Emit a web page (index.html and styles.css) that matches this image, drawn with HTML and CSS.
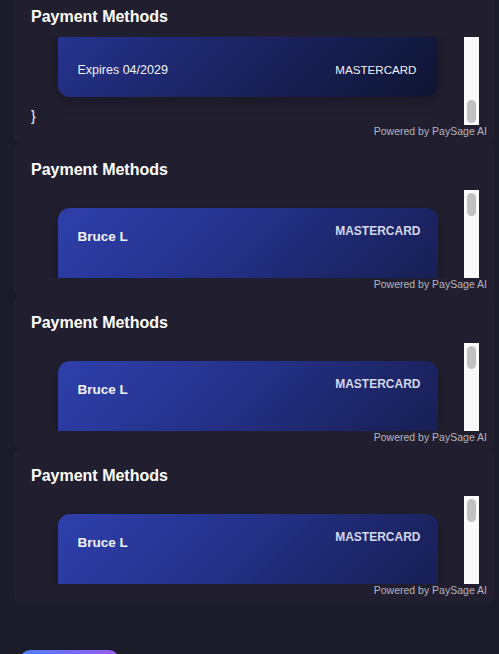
FILE: index.html
```html
<!DOCTYPE html>
<html lang="en">
<head>
<meta charset="utf-8">
<title>Payment Methods</title>
<link rel="stylesheet" href="styles.css">
</head>
<body>
<div class="stack">
  <section class="panel">
    <h2 class="panel-title">Payment Methods</h2>
    <div class="frame at-end">
      <div class="viewport">
        <div class="card">
          <div class="card-top">
            <span class="holder">Bruce L</span>
            <span class="brand">MASTERCARD</span>
          </div>
          <div class="card-bottom">
            <span class="expires">Expires 04/2029</span>
            <span class="brand-plain">MASTERCARD</span>
          </div>
        </div>
        <div class="raw">}</div>
      </div>
      <div class="scrollbar"><div class="thumb"></div></div>
    </div>
    <div class="powered">Powered by PaySage AI</div>
  </section>
  <section class="panel">
    <h2 class="panel-title">Payment Methods</h2>
    <div class="frame">
      <div class="viewport">
        <div class="card">
          <div class="card-top">
            <span class="holder">Bruce L</span>
            <span class="brand">MASTERCARD</span>
          </div>
          <div class="card-bottom">
            <span class="expires">Expires 04/2029</span>
            <span class="brand-plain">MASTERCARD</span>
          </div>
        </div>
        <div class="raw">}</div>
      </div>
      <div class="scrollbar"><div class="thumb"></div></div>
    </div>
    <div class="powered">Powered by PaySage AI</div>
  </section>
  <section class="panel">
    <h2 class="panel-title">Payment Methods</h2>
    <div class="frame">
      <div class="viewport">
        <div class="card">
          <div class="card-top">
            <span class="holder">Bruce L</span>
            <span class="brand">MASTERCARD</span>
          </div>
          <div class="card-bottom">
            <span class="expires">Expires 04/2029</span>
            <span class="brand-plain">MASTERCARD</span>
          </div>
        </div>
        <div class="raw">}</div>
      </div>
      <div class="scrollbar"><div class="thumb"></div></div>
    </div>
    <div class="powered">Powered by PaySage AI</div>
  </section>
  <section class="panel">
    <h2 class="panel-title">Payment Methods</h2>
    <div class="frame">
      <div class="viewport">
        <div class="card">
          <div class="card-top">
            <span class="holder">Bruce L</span>
            <span class="brand">MASTERCARD</span>
          </div>
          <div class="card-bottom">
            <span class="expires">Expires 04/2029</span>
            <span class="brand-plain">MASTERCARD</span>
          </div>
        </div>
        <div class="raw">}</div>
      </div>
      <div class="scrollbar"><div class="thumb"></div></div>
    </div>
    <div class="powered">Powered by PaySage AI</div>
  </section>
</div>
<div class="actions">
  <button class="primary" type="button">Continue</button>
</div>
<script src="script.js"></script>
</body>
</html>
```

FILE: styles.css
```css
html {
  overflow: hidden;
}

body {
  margin: 0;
  background: #1c1b2a;
  font-family: "Liberation Sans", Arial, sans-serif;
  color: #ffffff;
}

.stack {
  margin: -10px 5px 0 14px;
  display: flex;
  flex-direction: column;
}

.panel {
  background: #211f2f;
  border-radius: 6px;
  padding: 17px 15px 6px 17px;
  display: flex;
  flex-direction: column;
}

.panel-title {
  margin: 0 0 11px 0;
  font-size: 16px;
  line-height: 19px;
  font-weight: 700;
  color: #ffffff;
}

.frame {
  height: 88px;
  display: flex;
}

.viewport {
  flex: 1;
  overflow: hidden;
  padding-top: 18px;
  box-sizing: border-box;
}

.scrollbar {
  width: 15px;
  background: #fafafa;
  display: flex;
  flex-direction: column;
  justify-content: flex-start;
  align-items: center;
  padding: 3px 0 2px 0;
  box-sizing: border-box;
}

.at-end .scrollbar {
  justify-content: flex-end;
}

.thumb {
  width: 9px;
  height: 23px;
  border-radius: 5px;
  background: #c1c1c1;
}

.card {
  width: 380px;
  height: 240px;
  margin: 0 auto;
  box-sizing: border-box;
  padding: 16px 20px 20px 20px;
  border-radius: 12px;
  background: linear-gradient(135deg, #2e3fab 0%, #25338d 30%, #1c2566 58%, #0e1430 100%);
  box-shadow: 0 4px 14px rgba(0, 0, 0, 0.25);
  display: flex;
  flex-direction: column;
  justify-content: space-between;
}

.card-top {
  display: flex;
  justify-content: space-between;
  align-items: flex-start;
}

.holder {
  margin-top: 4px;
  font-size: 13.5px;
  line-height: 17px;
  font-weight: 700;
  color: #f2f3f8;
}

.brand {
  margin-right: -3px;
  font-size: 12px;
  line-height: 14px;
  font-weight: 700;
  color: #d5d7ea;
}

.card-bottom {
  display: flex;
  justify-content: space-between;
  align-items: center;
  font-size: 12.5px;
  line-height: 14px;
  color: #f2f3f8;
}

.brand-plain {
  font-size: 11.6px;
  margin-right: 1px;
}

.raw {
  margin-top: 10px;
  font-size: 14px;
  line-height: 18px;
  color: #ffffff;
}

.powered {
  align-self: flex-end;
  margin-right: -8px;
  font-size: 10.5px;
  line-height: 12px;
  color: #b6b6bf;
}

.actions {
  padding: 48px 0 0 20px;
}

.primary {
  width: 99px;
  height: 36px;
  border: 0;
  border-radius: 10px;
  background: linear-gradient(90deg, #4d7ff0, #9b5cf0);
  color: #ffffff;
  font-family: "Liberation Sans", Arial, sans-serif;
  font-size: 14px;
  font-weight: 700;
}
```

FILE: script.js
```js
document.querySelectorAll('.frame.at-end .viewport').forEach(function (el) {
  el.scrollTop = el.scrollHeight;
});
```
